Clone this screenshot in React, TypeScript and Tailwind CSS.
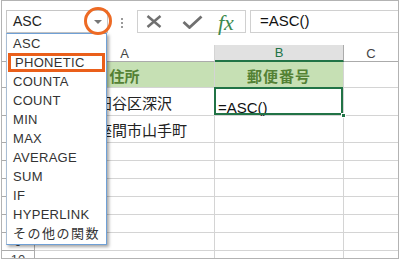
import React from 'react';

const functions = ['ASC', 'PHONETIC', 'COUNTA', 'COUNT', 'MIN', 'MAX', 'AVERAGE', 'SUM', 'IF', 'HYPERLINK'];

const rowHeights = ['h-[26px]', 'h-[28px]', 'h-[27px]', 'h-[18px]', 'h-[18px]', 'h-[18px]', 'h-[18px]', 'h-[18px]', 'h-[18px]', 'h-[18px]'];

const cellsA = ['', '東京都世田谷区深沢', '神奈川県座間市山手町'];

const App: React.FC = () => {
  return (
    <div className="w-[400px] h-[260px] bg-white overflow-hidden font-['Liberation_Sans','Noto_Sans_CJK_JP',sans-serif] text-[#222]">
      <div className="relative ml-[1px] w-[398px] h-[259px] border border-[#b3b3b3] overflow-hidden">
        {/* formula bar */}
        <div className="flex items-start h-[44px] pt-[9px] pl-[4px]">
          <div className="w-[102px] h-[23px] border border-[#c6c6c6] flex items-center pl-[6px] text-[14px] relative">
            ASC
            <span className="absolute left-[87px] top-[9px] w-0 h-0 border-l-[4px] border-r-[4px] border-t-[4px] border-l-transparent border-r-transparent border-t-[#777]" />
          </div>
          <div className="ml-[13px] mt-[8px] flex flex-col gap-[2px]">
            <span className="w-[2px] h-[2px] bg-[#9a9a9a]" />
            <span className="w-[2px] h-[2px] bg-[#9a9a9a]" />
            <span className="w-[2px] h-[2px] bg-[#9a9a9a]" />
          </div>
          <div className="ml-[14px] w-[109px] h-[23px] border border-[#d0d0d0] flex items-center">
            <svg width="16" height="13" viewBox="0 0 16 13" className="ml-[8px]">
              <path d="M1.5 1 L14.5 12 M14.5 1 L1.5 12" stroke="#707070" strokeWidth="2.5" fill="none" />
            </svg>
            <svg width="21" height="14" viewBox="0 0 21 14" className="ml-[20px]">
              <path d="M1.5 7 L7.5 12.5 L19.5 1.5" stroke="#707070" strokeWidth="2.8" fill="none" />
            </svg>
            <span className="ml-[15px] mt-[2px] font-['Liberation_Serif',serif] italic text-[22px] text-[#3c8a4e] leading-none">fx</span>
          </div>
          <div className="ml-[4px] flex-1 h-[23px] border-y border-l border-[#d0d0d0] flex items-center pl-[9px] text-[15px] text-[#111]">
            =ASC()
          </div>
        </div>

        {/* sheet */}
        <div className="grid grid-cols-[33px_180px_129px_1fr] leading-none">
          <div className="h-[17px] border-r border-b border-[#ababab]" />
          <div className="h-[17px] border-r border-b border-[#d4d4d4] border-b-[#ababab] flex items-center justify-center text-[13px] text-[#444]">A</div>
          <div className="h-[17px] bg-[#e1e1e1] border-r border-[#ababab] border-b-2 border-b-[#217346] flex items-center justify-center text-[13px] text-[#217346]">B</div>
          <div className="h-[17px] border-b border-[#ababab] flex items-center justify-center text-[13px] text-[#444]">C</div>

          {rowHeights.map((h, i) => (
            <React.Fragment key={i}>
              <div className={`${h} border-r border-b border-[#ababab] flex items-center justify-center text-[13px] text-[#444]`}>
                {i + 1}
              </div>
              {i === 0 ? (
                <div className={`${h} bg-[#c6e0b4] border-r border-b border-[#d4d4d4] flex items-end justify-center pb-[3px] text-[15px] font-bold text-[#548235]`}>
                  住所
                </div>
              ) : (
                <div className={`${h} border-r border-b border-[#d4d4d4] flex items-end pl-[2px] pb-[4px] text-[15px] whitespace-nowrap overflow-hidden`}>
                  {cellsA[i] || ''}
                </div>
              )}
              {i === 0 ? (
                <div className={`${h} bg-[#c6e0b4] border-r border-b border-[#d4d4d4] flex items-end justify-center pb-[3px] text-[15px] font-bold text-[#548235] tracking-[1px]`}>
                  郵便番号
                </div>
              ) : i === 1 ? (
                <div className={`${h} relative border-r border-b border-[#d4d4d4] flex items-end pl-[3px] pb-0 text-[15px] text-[#111]`}>
                  =ASC()
                  <div className="absolute -left-[1px] -top-[1px] right-0 bottom-0 border-2 border-[#217346]" />
                  <div className="absolute -right-[3px] -bottom-[3px] w-[5px] h-[5px] bg-[#217346] border border-white" />
                </div>
              ) : (
                <div className={`${h} border-r border-b border-[#d4d4d4]`} />
              )}
              <div className={`${h} border-b border-[#d4d4d4]`} />
            </React.Fragment>
          ))}
        </div>

        {/* dropdown list */}
        <div className="absolute left-[4px] top-[32px] w-[101px] border border-[#6fa0d6] border-l-[#a9bdd3] bg-white shadow-[2px_2px_3px_rgba(0,0,0,0.35)] text-[13px] text-[#333] pb-[1px]">
          {functions.map((f) =>
            f === 'PHONETIC' ? (
              <div key={f} className="h-[19px] mx-[1px] border-[3px] border-[#ea5f1a] pl-[4px] flex items-center tracking-[0.3px]">
                {f}
              </div>
            ) : (
              <div key={f} className="h-[19px] pl-[6px] flex items-center tracking-[0.3px]">
                {f}
              </div>
            )
          )}
          <div className="h-[19px] pl-[6px] flex items-center tracking-[1.5px]">その他の関数</div>
        </div>

        {/* highlight circle */}
        <svg className="absolute left-[81px] top-[5px]" width="30" height="30" viewBox="0 0 30 30">
          <circle cx="15" cy="15" r="12.5" stroke="#ed6a24" strokeWidth="3" fill="none" />
        </svg>
      </div>
    </div>
  );
};

export default App;
